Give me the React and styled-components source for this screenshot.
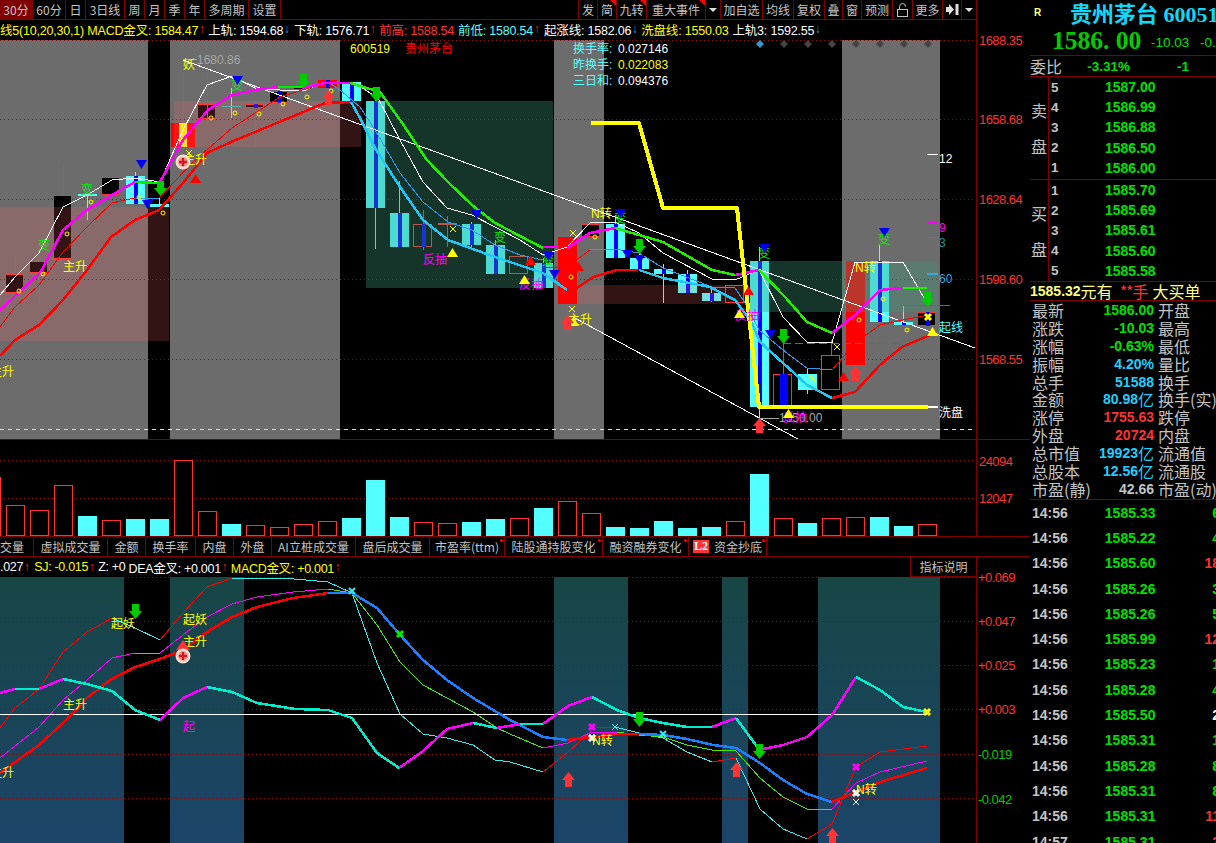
import styled, { createGlobalStyle } from 'styled-components';

const FONT = '"Liberation Sans", "Noto Sans CJK SC", sans-serif';
const CJK = '"Noto Sans CJK SC", "Liberation Sans", sans-serif';
const LINE = '#800000';
const GREY = '#c4c4c4';
const RED = '#ff3232';
const CYAN = '#54ffff';

const xOf = (k) => 15 + 24 * k;

const TOOLS_LEFT = [
  ['30分', 33, true], ['60分', 33], ['日', 20], ['3日线', 39], ['周', 20], ['月', 20], ['季', 20], ['年', 20], ['多周期', 44], ['设置', 32],
];

const INFO = [
  ['线5(10,20,30,1) MACD金叉: 1584.47', '#ffff00', 'up', 3],
  ['上轨: 1594.68', '#ffffff', 'down', 4],
  ['下轨: 1576.71', '#ffffff', 'up', 3],
  ['前高: 1588.54', RED, '', 4],
  ['前低: 1580.54', CYAN, 'up', 4],
  ['起涨线: 1582.06', '#ffffff', 'down', 3],
  ['洗盘线: 1550.03', '#ffff00', '', 4],
  ['上轨3: 1592.55', '#ffffff', 'down', 0],
];

const TABS = [
  ['成交量', 34], ['虚拟成交量', 74], ['金额', 38], ['换手率', 50], ['内盘', 38], ['外盘', 38],
  ['AI立桩成交量', 84], ['盘后成交量', 74], ['市盈率(ttm)', 75, true], ['陆股通持股变化', 98, true], ['融资融券变化', 86, true],
];

const MACD_INFO = [
  ['.027', '#ffffff', 'up', 4], ['SJ: -0.015', '#ffff00', 'up', 3], ['Z: +0', '#ffffff', '', 3],
  ['DEA金叉: +0.001', '#ffffff', 'up', 3], ['MACD金叉: +0.001', '#ffff00', 'up', 0],
];

// k, kind, top, bottom, wick top, wick bottom, strip width
const CANDLES = [
  [-1, 'h', 295, 340, 290, 340, 0], [0, 'h', 274, 293, 258, 293, 0], [1, 'h', 261, 273, 248, 302, 0],
  [2, 'h', 195, 259, 163, 259, 0], [3, 'd', 194, 194, 194, 220, 0], [4, 'h', 177, 195, 177, 195, 0],
  [5, 'c', 176, 204, 172, 204, 4], [6, 'c', 204, 207, 198, 207, 0], [8, 'h', 104, 119, 67, 124, 0],
  [9, 't', 106, 106, 88, 118, 0], [10, 'h', 104, 108, 100, 147, 4], [11, 'h', 91, 103, 90, 113, 4],
  [12, 'h', 86, 90, 84, 94, 0], [13, 'r', 80, 88, 76, 90, 4], [14, 'c', 82, 101, 82, 101, 4],
  [15, 'c', 101, 208, 90, 249, 4], [16, 'c', 213, 247, 181, 247, 4], [17, 'h', 224, 247, 210, 250, 4],
  [18, 'x', 223, 223, 216, 247, 0], [19, 'c', 224, 245, 222, 247, 4], [20, 'c', 245, 274, 240, 274, 4],
  [21, 'h', 256, 274, 256, 274, 0], [22, 'c', 263, 288, 258, 288, 4], [23, 'r', 237, 304, 228, 325, 0],
  [24, 'h', 224, 237, 224, 240, 0], [25, 'c', 224, 258, 215, 258, 4], [26, 'c', 258, 269, 250, 269, 4],
  [27, 'c', 269, 274, 264, 303, 4], [28, 'c', 274, 293, 270, 293, 4], [29, 'c', 293, 301, 288, 302, 4],
  [30, 'h', 285, 303, 285, 303, 0], [31, 'c', 261, 407, 247, 433, 4], [32, 'h', 374, 407, 343, 407, 8],
  [33, 'c', 374, 390, 368, 394, 0], [34, 'h', 355, 390, 340, 390, 0], [35, 'r', 261, 365, 261, 365, 0],
  [36, 'c', 261, 322, 245, 322, 4], [37, 'c', 322, 325, 306, 325, 4], [38, 'h', 312, 326, 305, 326, 4],
];

const VOLUMES = [
  ['h', 477], ['h', 505], ['h', 510], ['h', 485], ['c', 516], ['h', 520], ['c', 519], ['c', 519], ['h', 460], ['h', 511],
  ['c', 524], ['h', 525], ['h', 527], ['h', 524], ['h', 521], ['c', 518], ['c', 480], ['c', 517], ['h', 522], ['h', 523],
  ['c', 522], ['c', 519], ['h', 518], ['c', 508], ['h', 501], ['h', 513], ['c', 527], ['c', 528], ['c', 521], ['c', 528],
  ['c', 527], ['h', 521], ['c', 474], ['h', 518], ['c', 523], ['h', 518], ['h', 517], ['c', 517], ['c', 526], ['h', 524],
];

const THICK = 2.5;

const PRICE_LINES = [
  ['#ffffff', 1, '183,60 975,348'],
  ['#ffffff', 1, '573,317 798,439'],
  ['#ffffff', 1, '0,295 15,277 39,253 63,207 87,195 112,180 135,178 160,182 183,130 207,85 232,76 257,89 303,91 325,82 353,82 378,98 400,140 423,182 447,208 472,215 495,227 520,240 543,255 567,247 590,223 615,222 639,233 663,253 712,279 735,280 759,270 783,317 807,342 832,343 855,262 903,262 927,303'],
  ['#ff0000', 1, '0,327 15,307 39,285 63,252 87,227 112,203 135,198 159,198 192,163 232,128 280,97 328,82'],
  ['#3399ee', 1, '328,82 340,90 360,107 375,130 400,173 423,202 448,222 472,230 495,245 520,255 543,260'],
  ['#ff0000', 1, '543,268 567,267 590,250'],
  ['#3399ee', 1, '590,249 615,249 639,253 663,268 712,287 735,288 745,303 759,330 783,350 807,368 832,370'],
  ['#ff0000', 1, '832,370 855,343 880,325 903,320 928,315'],
  ['#ff0000', THICK, '0,356 15,340 39,325 63,300 87,270 111,237 135,220 159,210 183,183 207,153 231,142 260,130 325,103 351,102'],
  ['#1fc8f5', THICK, '351,102 360,118 375,148 400,187 423,220 448,240 495,257 543,273 567,290'],
  ['#ff0000', THICK, '577,288 593,277 617,270 638,270'],
  ['#1fc8f5', THICK, '639,270 663,278 710,287 735,300 752,323 760,342 783,363 807,385 832,398'],
  ['#ff0000', THICK, '832,398 855,392 880,365 902,347 930,335'],
  ['#ff00ff', THICK, '0,310 40,273 63,230 87,210 112,195 135,182'],
  ['#00ee00', THICK, '135,182 158,183'],
  ['#ff00ff', THICK, '160,182 183,140 197,123 208,110 232,95 260,89 278,87'],
  ['#00ee00', THICK, '278,87 302,87'],
  ['#ff00ff', THICK, '302,88 325,83 350,83'],
  ['#22ee00', THICK, '350,83 380,92 400,120 427,160 448,182 472,205 495,223 543,248'],
  ['#ff00ff', THICK, '543,247 557,247'],
  ['#ff00ff', THICK, '567,248 590,233 615,228'],
  ['#22ee00', THICK, '615,228 663,242 712,270 735,275'],
  ['#ff00ff', THICK, '735,275 759,270'],
  ['#22ee00', THICK, '759,270 785,297 807,322 832,333'],
  ['#ff00ff', THICK, '832,333 855,315 880,290 902,288'],
  ['#22ee00', THICK, '903,288 927,288'],
  ['#ffff00', 4, '591,123 639,123 663,208 737,208 759,407 928,407'],
  ['#ffffff', 2, '928,407 938,407'],
];

const MACD_LINES = [
  ['#ff0000', 1, '0,728 15,708 39,689 63,652 87,632 112,618'],
  ['#33eeee', 1, '112,618 135,628 160,640'],
  ['#ff0000', 1, '160,640 183,613 207,587 232,578'],
  ['#33eeee', 1, '232,578 283,578 328,582 352,593 377,663 400,714 423,734 447,738 473,745 495,760 510,762 543,772'],
  ['#ff0000', 1, '543,772 568,752 592,730'],
  ['#ff0000', 1, '592,727 615,727'],
  ['#33eeee', 1, '615,727 639,733 663,738 687,752 712,762'],
  ['#ff0000', 1, '712,762 736,758'],
  ['#33eeee', 1, '736,758 760,809 783,829 807,839'],
  ['#ff0000', 1, '807,839 832,824 856,767 880,752 927,746'],
  ['#ff00ff', 1, '0,758 39,727 63,700 87,680 112,658 135,653'],
  ['#44ee00', 1, '135,653 160,653'],
  ['#ff00ff', 1, '160,653 183,635 207,617 232,604 257,597 293,592 328,589'],
  ['#44ee00', 1, '328,589 352,593 377,625 400,662 423,685 447,698 473,712 497,728 510,734 543,748'],
  ['#ff00ff', 1, '543,748 568,743 592,732 617,732'],
  ['#44ee00', 1, '617,732 639,735 663,737 687,745 712,750 736,751 760,778 783,797 807,809 832,809'],
  ['#ff00ff', 1, '832,809 856,783 880,772 927,761'],
  ['#ffffff', 1, '0,714 927,714'],
  ['#ff0000', THICK, '0,773 39,745 63,723 87,698 110,680 135,667 160,659 183,650 207,632 232,617 257,607 293,598 328,593'],
  ['#1a80ff', THICK, '328,593 352,593 377,608 400,635 423,660 447,680 473,698 510,720 543,737 567,740'],
  ['#ff0000', THICK, '567,740 592,737 617,734 639,734'],
  ['#1a80ff', THICK, '639,734 663,735 687,739 713,745 736,748 760,763 783,780 807,794 832,802'],
  ['#ff0000', THICK, '832,802 856,792 880,782 927,768'],
  ['#ff00ff', THICK, '0,693 15,689'],
  ['#00eecc', THICK, '15,689 39,689'],
  ['#ff00ff', THICK, '39,689 63,679'],
  ['#00eecc', THICK, '63,679 87,684 112,691 135,710 160,720'],
  ['#ff00ff', THICK, '160,720 183,698 207,687'],
  ['#00eecc', THICK, '207,687 232,692 257,703 295,709 328,710 352,718 377,753 399,768'],
  ['#ff00ff', THICK, '399,768 423,751 447,729 473,723'],
  ['#00eecc', THICK, '473,723 497,728'],
  ['#ff00ff', THICK, '497,728 520,724'],
  ['#00eecc', THICK, '520,724 543,724'],
  ['#ff00ff', THICK, '543,724 568,706 592,697'],
  ['#00eecc', THICK, '592,697 617,710 639,718 663,723 687,727 712,727'],
  ['#ff00ff', THICK, '712,727 736,718'],
  ['#00eecc', THICK, '736,718 758,748'],
  ['#ff00ff', THICK, '758,750 783,745 807,737 832,715 856,677'],
  ['#00eecc', THICK, '856,677 880,690 903,707 927,712'],
];

const PRICE_LABELS = [
  [197, 64, '1680.86', '#a8a8a8'], [350, 53, '600519', '#ffff00'], [405, 53, '贵州茅台', '#ff0000'],
  [573, 53, '换手率:', CYAN], [618, 53, '0.027146', '#ffffff'], [573, 69, '昨换手:', CYAN], [618, 69, '0.022083', '#ffff00'],
  [573, 85, '三日和:', CYAN], [618, 85, '0.094376', '#ffffff'],
  [183, 69, '妖', '#ffff00'], [63, 271, '主升', '#ffff00'], [-10, 376, '主升', '#ffff00'], [183, 164, '主升', '#ffff00'],
  [423, 264, '反抽', '#ff00ff'], [519, 289, '反抽', '#ff00ff'], [568, 324, '主升', '#ffff00'], [735, 320, '反抽', '#ff00ff'],
  [767, 422, '—1550.00', '#a8a8a8'], [783, 422, '反抽', '#ff00ff'],
  [591, 218, 'N转', '#ffff00'], [855, 272, 'N转', '#ffff00'],
  [81, 194, '变', '#00ee00'], [38, 250, '变', '#00ee00'], [231, 90, '变', '#00ee00'], [494, 242, '变', '#00ee00'],
  [542, 265, '变', '#00ee00'], [614, 223, '变', '#00ee00'], [758, 258, '变', '#00ee00'], [878, 244, '变', '#00ee00'],
  [939, 417, '洗盘', '#ffffff'], [939, 332, '起线', CYAN], [939, 283, '60', '#33aadd'], [939, 163, '12', '#ffffff'],
  [939, 232, '9', '#ff00ff'], [939, 247, '3', '#109a9a'],
];

const MACD_LABELS = [
  [111, 628, '起妖', '#ffff00'], [183, 624, '起妖', '#ffff00'], [183, 646, '主升', '#ffff00'], [63, 709, '主升', '#ffff00'],
  [-10, 777, '主升', '#ffff00'], [183, 731, '起', '#ff00ff'], [592, 745, 'N转', '#ffff00'], [856, 794, 'N转', '#ffff00'],
];

const BLUE_TRI = [[141, 160], [147, 200], [237, 76], [476, 210], [548, 252], [554, 270], [620, 209], [627, 250], [639, 255], [764, 244], [770, 330], [884, 228]];
const RED_TRI = [[195, 174], [748, 286], [843, 372], [530, 256], [578, 262]];
const YELLOW_TRI = [[452, 248], [524, 275], [573, 317], [739, 309], [788, 409], [932, 327]];
const GREEN_ARROWS = [[160, 181], [303, 74], [376, 87], [639, 239], [783, 329], [927, 292]];
const RED_ARROWS = [[567, 315], [328, 90], [759, 418], [855, 366]];
const CIRCLES = [[19, 291], [43, 274], [67, 234], [91, 202], [139, 197], [163, 213], [211, 118], [235, 113], [259, 114], [283, 104], [307, 97], [331, 91], [571, 277], [595, 237], [859, 320], [883, 299], [907, 330]];
const PRICE_CROSSES = [[453, 229, '#ffff00', 1], [573, 233, '#ffff00', 1], [572, 309, '#ffff00', 1], [837, 347, '#ffff00', 1], [813, 379, '#ffff00', 1], [928, 317, '#ffff00', 3], [189, 153, '#ffff00', 1]];

const MACD_GREEN_ARROWS = [[135, 604], [639, 712], [759, 744]];
const MACD_RED_ARROWS = [[568, 772], [736, 762], [832, 828]];
const MACD_CROSSES = [[352, 591, '#33eeee', 2], [400, 634, '#00ee00', 3], [592, 727, '#ff00ff', 3], [592, 738, '#ffffff', 3], [615, 727, '#33eeee', 1], [663, 734, '#33eeee', 2], [856, 767, '#ff00ff', 3], [856, 793, '#ffffff', 3], [856, 802, '#ffffff', 1], [927, 712, '#ffff00', 3]];

const SELL = [['5', '1587.00'], ['4', '1586.99'], ['3', '1586.88'], ['2', '1586.50'], ['1', '1586.00']];
const BUY = [['1', '1585.70'], ['2', '1585.69'], ['3', '1585.61'], ['4', '1585.60'], ['5', '1585.58']];

const STATS = [
  ['最新', '1586.00', '', '#00e000', '开盘'], ['涨跌', '-10.03', '', '#00e000', '最高'], ['涨幅', '-0.63%', '', '#00e000', '最低'],
  ['振幅', '4.20%', '', '#1fd0ff', '量比'], ['总手', '51588', '', '#1fd0ff', '换手'], ['金额', '80.98', '亿', '#1fd0ff', '换手(实)'],
  ['涨停', '1755.63', '', RED, '跌停'], ['外盘', '20724', '', RED, '内盘'], ['总市值', '19923', '亿', '#1fd0ff', '流通值'],
  ['总股本', '12.56', '亿', '#1fd0ff', '流通股'], ['市盈(静)', '42.66', '', GREY, '市盈(动)'],
];

const TICKS = [
  ['1585.33', '62', '#00e000'], ['1585.22', '48', '#00e000'], ['1585.60', '183', RED], ['1585.26', '37', '#00e000'],
  ['1585.26', '55', '#00e000'], ['1585.99', '126', RED], ['1585.23', '15', '#00e000'], ['1585.28', '42', '#00e000'],
  ['1585.50', '24', '#ffffff'], ['1585.31', '17', '#00e000'], ['1585.28', '84', '#00e000'], ['1585.31', '83', '#00e000'],
  ['1585.31', '115', RED], ['1585.31', '21', RED],
];

function Grid({ rows, dashed }) {
  return (
    <>
      {rows.map((y) => <line key={y} x1="0" x2="976" y1={y + 0.5} y2={y + 0.5} stroke="#8c0c0c" strokeDasharray="1 3" />)}
      {dashed && <line x1="0" x2="976" y1={dashed + 0.5} y2={dashed + 0.5} stroke="#ffff00" strokeDasharray="4 4" />}
    </>
  );
}

function Lines({ data }) {
  return data.map(([color, width, points], i) => (
    <polyline key={i} points={points} fill="none" stroke={color} strokeWidth={width} strokeLinejoin="round" shapeRendering="crispEdges" />
  ));
}

function Candle({ k, kind, top, bottom, wickTop, wickBottom, strip }) {
  const x = xOf(k);
  const isUp = kind === 'h' || kind === 'r' || kind === 'x';
  const wick = isUp ? RED : CYAN;
  return (
    <g shapeRendering="crispEdges">
      <line x1={x + 0.5} x2={x + 0.5} y1={wickTop} y2={wickBottom} stroke={wick} />
      {kind === 'h' && <rect x={x - 9.5} y={top + 0.5} width={18} height={bottom - top - 1} fill="#000" stroke={RED} strokeWidth="1" />}
      {kind === 'r' && <rect x={x - 9} y={top} width={19} height={bottom - top} fill="#ff0000" />}
      {kind === 'c' && <rect x={x - 9} y={top} width={19} height={bottom - top} fill={CYAN} />}
      {kind === 'd' && <line x1={x - 9} x2={x + 10} y1={top + 0.5} y2={top + 0.5} stroke={CYAN} strokeWidth="2" />}
      {kind === 't' && <line x1={x - 9} x2={x + 10} y1={top + 0.5} y2={top + 0.5} stroke="#2fc4c4" strokeWidth="1" />}
      {kind === 'x' && <line x1={x - 9} x2={x + 10} y1={top + 0.5} y2={top + 0.5} stroke={RED} strokeWidth="2" />}
      {strip > 0 && <rect x={x - strip / 2 + 0.5} y={top} width={strip} height={bottom - top} fill="#0000ff" />}
    </g>
  );
}

function Triangle({ x, y, color, down }) {
  const points = down ? `${x - 5},${y} ${x + 6},${y} ${x + 0.5},${y + 9}` : `${x - 5},${y + 9} ${x + 6},${y + 9} ${x + 0.5},${y}`;
  return <polygon points={points} fill={color} />;
}

function ArrowDown({ x, y, color }) {
  return <polygon points={`${x - 3},${y} ${x + 4},${y} ${x + 4},${y + 7} ${x + 7},${y + 7} ${x + 0.5},${y + 15} ${x - 6},${y + 7} ${x - 3},${y + 7}`} fill={color} />;
}

function ArrowUp({ x, y, color }) {
  return <polygon points={`${x + 0.5},${y} ${x + 7},${y + 8} ${x + 4},${y + 8} ${x + 4},${y + 15} ${x - 3},${y + 15} ${x - 3},${y + 8} ${x - 6},${y + 8}`} fill={color} />;
}

function Cross({ x, y, color, width }) {
  return <path d={`M${x - 3} ${y - 3}L${x + 3} ${y + 3}M${x + 3} ${y - 3}L${x - 3} ${y + 3}`} stroke={color} strokeWidth={width} fill="none" />;
}

function PlusCircle({ x, y }) {
  return (
    <g>
      <circle cx={x} cy={y} r="7.5" fill="#f6dccf" />
      <circle cx={x} cy={y} r="5" fill="#ee9c94" />
      <path d={`M${x - 4} ${y}H${x + 4}M${x} ${y - 4}V${y + 4}`} stroke="#d8141c" strokeWidth="2.4" />
    </g>
  );
}

function Labels({ data }) {
  return data.map(([x, y, text, color]) => <ChartLabel key={`${x}-${y}`} x={x} y={y} fill={color}>{text}</ChartLabel>);
}

function PriceChart() {
  return (
    <ChartSvg viewBox="0 40 1030 399" width="1030" height="399">
      {[[0, 148], [170, 170], [554, 50], [842, 98]].map(([x, w]) => <rect key={x} x={x} y="40" width={w} height="399" fill="#6c6c6c" />)}
      <Grid rows={[40, 119, 199, 279, 359]} dashed={429} />
      {CANDLES.map(([k, kind, top, bottom, wickTop, wickBottom, strip]) => (
        <Candle key={k} k={k} kind={kind} top={top} bottom={bottom} wickTop={wickTop} wickBottom={wickBottom} strip={strip} />
      ))}
      <line x1="183.5" x2="183.5" y1="62" y2="165" stroke={RED} />
      <rect x="171" y="123" width="24" height="24" fill="#ff0000" />
      <rect x="179" y="123" width="8" height="24" fill="#ffff00" />
      <line x1="207.5" x2="207.5" y1="67" y2="124" stroke={RED} />
      {/* zones lie over the candles, that is why the candles look tinted */}
      <rect x="0" y="207" width="169" height="134" fill="#ff6464" fillOpacity="0.2" />
      <rect x="174" y="101" width="187" height="46" fill="#ff6464" fillOpacity="0.2" />
      <rect x="577" y="285" width="169" height="19" fill="#ff6464" fillOpacity="0.2" />
      <rect x="366" y="101" width="187" height="187" fill="#409878" fillOpacity="0.35" />
      <rect x="750" y="261" width="188" height="51" fill="#409878" fillOpacity="0.35" />
      <Lines data={PRICE_LINES} />
      <g shapeRendering="crispEdges">
        <line x1="135" x2="159" y1="198.5" y2="198.5" stroke="#3399ee" />
        <line x1="183" x2="197" y1="59.5" y2="59.5" stroke="#a8a8a8" />
        <line x1="759" x2="768" y1="418.5" y2="418.5" stroke="#a8a8a8" />
        <line x1="783" x2="902" y1="343.5" y2="343.5" stroke="#ff00ff" strokeDasharray="8 4" />
        <line x1="903" x2="950" y1="305.5" y2="305.5" stroke="#ff00ff" />
        <line x1="927" x2="938" y1="154.5" y2="154.5" stroke="#ffffff" />
        <line x1="927" x2="938" y1="222.5" y2="222.5" stroke="#ff00ff" strokeWidth="2" />
        <line x1="927" x2="938" y1="237.5" y2="237.5" stroke="#109a9a" />
        <line x1="927" x2="938" y1="274" y2="274" stroke="#33aadd" strokeWidth="2" />
      </g>
      {[760, 784, 808, 832, 856, 880, 904, 928].map((x, i) => (
        <polygon key={x} points={`${x},40 ${x + 4},44 ${x},48 ${x - 4},44`} fill={i === 0 ? '#3399cc' : '#444444'} />
      ))}
      {CIRCLES.map(([x, y]) => <circle key={`${x}-${y}`} cx={x} cy={y} r="2" fill="none" stroke="#ffff00" />)}
      {PRICE_CROSSES.map(([x, y, c, w]) => <Cross key={`${x}-${y}`} x={x} y={y} color={c} width={w} />)}
      <Labels data={PRICE_LABELS} />
      {BLUE_TRI.map(([x, y]) => <Triangle key={`${x}-${y}`} x={x} y={y} color="#0000ee" down />)}
      {RED_TRI.map(([x, y]) => <Triangle key={`${x}-${y}`} x={x} y={y} color="#ff0000" />)}
      {YELLOW_TRI.map(([x, y]) => <Triangle key={`${x}-${y}`} x={x} y={y} color="#ffff00" />)}
      {GREEN_ARROWS.map(([x, y]) => <ArrowDown key={`${x}-${y}`} x={x} y={y} color="#00cc00" />)}
      {RED_ARROWS.map(([x, y]) => <ArrowUp key={`${x}-${y}`} x={x} y={y} color="#ff3333" />)}
      <PlusCircle x={183} y={162} />
      <line x1="976.5" x2="976.5" y1="40" y2="439" stroke={LINE} />
      {[[45, '1688.35'], [124, '1658.68'], [204, '1628.64'], [284, '1598.60'], [364, '1568.55']].map(([y, t]) => (
        <AxisLabel key={t} x="979" y={y} fill={RED}>{t}</AxisLabel>
      ))}
    </ChartSvg>
  );
}

function VolumeChart() {
  return (
    <ChartSvg viewBox="0 440 1030 96" width="1030" height="96">
      <Grid rows={[460, 498]} />
      {VOLUMES.map(([kind, top], i) => {
        const x = xOf(i - 1);
        return kind === 'c'
          ? <rect key={i} x={x - 9} y={top} width="19" height={536 - top} fill={CYAN} shapeRendering="crispEdges" />
          : <rect key={i} x={x - 8.5} y={top + 0.5} width="18" height={535 - top} fill="#000" stroke={RED} shapeRendering="crispEdges" />;
      })}
      <line x1="976.5" x2="976.5" y1="440" y2="536" stroke={LINE} />
      <AxisLabel x="979" y="466" fill={RED}>24094</AxisLabel>
      <AxisLabel x="979" y="503" fill={RED}>12047</AxisLabel>
    </ChartSvg>
  );
}

function MacdChart() {
  return (
    <ChartSvg viewBox="0 577 1030 266" width="1030" height="266">
      <defs>
        <linearGradient id="macdZone" x1="0" x2="0" y1="0" y2="1">
          <stop offset="0" stopColor="#174645" />
          <stop offset="1" stopColor="#1b4469" />
        </linearGradient>
      </defs>
      {[[0, 124], [170, 74], [554, 74], [722, 26], [818, 122]].map(([x, w]) => <rect key={x} x={x} y="577" width={w} height="266" fill="url(#macdZone)" />)}
      <Grid rows={[577, 621, 665, 709, 754, 798]} />
      <Lines data={MACD_LINES} />
      {MACD_CROSSES.map(([x, y, c, w]) => <Cross key={`${x}-${y}`} x={x} y={y} color={c} width={w} />)}
      <Labels data={MACD_LABELS} />
      {MACD_GREEN_ARROWS.map(([x, y]) => <ArrowDown key={x} x={x} y={y} color="#00cc00" />)}
      {MACD_RED_ARROWS.map(([x, y]) => <ArrowUp key={x} x={x} y={y} color="#ff3333" />)}
      <polygon points="183,640 190,650 176,650" fill="#ff3333" />
      <PlusCircle x={183} y={656} />
      <line x1="976.5" x2="976.5" y1="577" y2="843" stroke={LINE} />
      {[[582, '+0.069', RED], [626, '+0.047', RED], [670, '+0.025', RED], [714, '+0.003', RED], [759, '-0.019', '#00cc00'], [804, '-0.042', '#00cc00']].map(([y, t, c]) => (
        <AxisLabel key={t} x="978" y={y} fill={c}>{t}</AxisLabel>
      ))}
    </ChartSvg>
  );
}

function InfoItems({ items }) {
  return items.map(([text, color, dir, gap]) => (
    <InfoItem key={text} $color={color} $gap={gap}>
      {text}
      {dir && <InfoArrow $dir={dir}>{dir === 'up' ? '↑' : '↓'}</InfoArrow>}
    </InfoItem>
  ));
}

function Toolbar() {
  return (
    <ToolRow>
      {TOOLS_LEFT.map(([label, width, active]) => <ToolButton key={label} $w={width} $active={active}>{label}</ToolButton>)}
      <ToolSpacer />
      <ToolButton $w={19}>发</ToolButton>
      <ToolButton $w={19} $flag>简</ToolButton>
      <ToolButton $w={30} $flag>九转</ToolButton>
      <ToolButton $w={59} $flag>重大事件</ToolButton>
      <ToolButton $w={15}><Caret /></ToolButton>
      <ToolButton $w={42}>加自选</ToolButton>
      <ToolButton $w={31}>均线</ToolButton>
      <ToolButton $w={31}>复权</ToolButton>
      <ToolButton $w={18}>叠</ToolButton>
      <ToolButton $w={19}>窗</ToolButton>
      <ToolButton $w={31}>预测</ToolButton>
      <ToolButton $w={20}>
        <svg width="12" height="14" viewBox="0 0 12 14" aria-hidden="true">
          <path d="M2.5 6V3.5a3 3 0 0 1 6 0" fill="none" stroke="#c4c4c4" />
          <rect x="0.5" y="6.5" width="10" height="7" fill="none" stroke="#c4c4c4" />
        </svg>
      </ToolButton>
      <ToolButton $w={30}>更多</ToolButton>
      <ToolButton $w={19}>
        <svg width="13" height="11" viewBox="0 0 13 11" aria-hidden="true">
          <path d="M0 3h3V0l5 5.5L3 11V8H0z" fill="#e0e0e0" />
          <rect x="9.5" y="0" width="3" height="11" fill="#e0e0e0" />
        </svg>
      </ToolButton>
      <ToolButton $w={14}><Caret /></ToolButton>
    </ToolRow>
  );
}

function QuoteRows({ rows }) {
  return (
    <QuoteList>
      {rows.map(([level, price]) => (
        <QuoteRow key={level}>
          <Level>{level}</Level>
          <Num $color="#00e000">{price}</Num>
        </QuoteRow>
      ))}
    </QuoteList>
  );
}

export default function App() {
  return (
    <Page>
      <GlobalStyle />
      <ChartArea>
        <Toolbar />
        <InfoBar><InfoItems items={INFO} /></InfoBar>
        <PricePane><PriceChart /></PricePane>
        <VolumePane><VolumeChart /></VolumePane>
        <TabRow>
          {TABS.map(([label, width, dot], i) => (
            <Tab key={label} $w={width} $right={i === 0}>{label}{dot && <TabDot />}</Tab>
          ))}
          <Tab $w={78}><Badge>L2</Badge>资金抄底<TabDot /></Tab>
        </TabRow>
        <MacdHead>
          <InfoItems items={MACD_INFO} />
          <HelpButton>指标说明</HelpButton>
        </MacdHead>
        <MacdChart />
      </ChartArea>
      <SidePanel>
        <StockHead>
          <NameRow><Badge2>R</Badge2><StockName>贵州茅台 600519</StockName></NameRow>
          <PriceRow>
            <BigPrice>1586. 00</BigPrice>
            <Change>-10.03</Change>
            <Change>-0.63%</Change>
          </PriceRow>
        </StockHead>
        <RatioRow>
          <SideText>委比</SideText>
          <RatioValue $w={68}>-3.31%</RatioValue>
          <RatioValue $w={59}>-1</RatioValue>
        </RatioRow>
        <BookSection $h={103}>
          <BookSide><span>卖</span><span>盘</span></BookSide>
          <QuoteRows rows={SELL} />
        </BookSection>
        <BookSection $h={102}>
          <BookSide><span>买</span><span>盘</span></BookSide>
          <QuoteRows rows={BUY} />
        </BookSection>
        <BigOrder>
          <Num $color="#ffff80">1585.32</Num><span>元有</span>
          <BigOrderRed>**手</BigOrderRed>
          <BigOrderLast>大买单</BigOrderLast>
        </BigOrder>
        <StatsList>
          {STATS.map(([label, value, unit, color, right]) => (
            <StatRow key={label}>
              <SideText>{label}</SideText>
              <StatValue $color={color}>{value}{unit && <Unit>{unit}</Unit>}</StatValue>
              <SideText>{right}</SideText>
            </StatRow>
          ))}
        </StatsList>
        <TickList>
          {TICKS.map(([price, vol, color], i) => (
            <TickRow key={i}>
              <Num $color={GREY}>14:5{i === 13 ? 7 : 6}</Num>
              <TickPrice>{price}</TickPrice>
              <TickVol $color={color}>{vol}</TickVol>
            </TickRow>
          ))}
        </TickList>
      </SidePanel>
    </Page>
  );
}

const GlobalStyle = createGlobalStyle`
  html, body {
    margin: 0;
    background: #000000;
    overflow: hidden;
  }
`;

const Page = styled.div`
  display: flex;
  width: 1216px;
  height: 843px;
  overflow: hidden;
  background: #000000;
  font-family: ${CJK};
`;

const ChartArea = styled.div`
  display: flex;
  flex-direction: column;
  width: 1030px;
  flex: none;
`;

const ToolRow = styled.div`
  display: flex;
  box-sizing: border-box;
  width: 977px;
  height: 20px;
  flex: none;
  border-bottom: 1px solid ${LINE};
  border-right: 1px solid ${LINE};
`;

const ToolSpacer = styled.div`
  flex: 1;
  border-right: 1px solid ${LINE};
`;

const ToolButton = styled.div`
  position: relative;
  display: flex;
  align-items: center;
  justify-content: center;
  box-sizing: border-box;
  width: ${(p) => p.$w}px;
  flex: none;
  border-right: 1px solid ${LINE};
  background: ${(p) => (p.$active ? '#800000' : 'transparent')};
  color: ${GREY};
  font-size: 12px;
  white-space: nowrap;
  &:last-child { border-right: none; }
  &::after {
    content: '';
    display: ${(p) => (p.$flag ? 'block' : 'none')};
    position: absolute;
    top: 0;
    right: 0;
    border-top: 6px solid #ff0000;
    border-left: 6px solid transparent;
  }
`;

const Caret = styled.span`
  width: 0;
  height: 0;
  border-top: 4px solid #e0e0e0;
  border-left: 4px solid transparent;
  border-right: 4px solid transparent;
`;

const InfoBar = styled.div`
  display: flex;
  align-items: center;
  box-sizing: border-box;
  height: 20px;
  padding-bottom: 2px;
  flex: none;
  width: 977px;
  border-right: 1px solid ${LINE};
  overflow: hidden;
  white-space: nowrap;
`;

const InfoItem = styled.span`
  display: inline-flex;
  align-items: center;
  margin-right: ${(p) => p.$gap}px;
  color: ${(p) => p.$color};
  font-family: ${FONT};
  font-size: 12.5px;
  letter-spacing: -0.2px;
`;

const InfoArrow = styled.span`
  width: 7px;
  text-align: center;
  font-size: 12px;
  color: ${(p) => (p.$dir === 'up' ? '#ff2020' : '#1fa0e0')};
`;

const PricePane = styled.div`
  height: 399px;
  flex: none;
  border-bottom: 1px solid ${LINE};
`;

const VolumePane = styled.div`
  height: 96px;
  flex: none;
  border-bottom: 1px solid ${LINE};
`;

const ChartSvg = styled.svg`
  display: block;
  overflow: visible;
`;

const ChartLabel = styled.text`
  font-family: ${FONT};
  font-size: 12px;
`;

const AxisLabel = styled.text`
  font-family: ${FONT};
  font-size: 13px;
  letter-spacing: -0.55px;
`;

const TabRow = styled.div`
  display: flex;
  height: 19px;
  flex: none;
  border-bottom: 1px solid ${LINE};
`;

const Tab = styled.div`
  position: relative;
  display: flex;
  align-items: center;
  justify-content: ${(p) => (p.$right ? 'flex-end' : 'center')};
  box-sizing: border-box;
  width: ${(p) => p.$w}px;
  padding-right: ${(p) => (p.$right ? 9 : 0)}px;
  flex: none;
  overflow: hidden;
  border-right: 1px solid ${LINE};
  color: ${GREY};
  font-size: 12px;
  white-space: nowrap;
`;

const TabDot = styled.span`
  position: absolute;
  top: 2px;
  right: 1px;
  width: 3px;
  height: 3px;
  border-radius: 50%;
  background: #ff0000;
`;

const Badge = styled.span`
  margin-right: 5px;
  padding: 0 1px;
  background: #ff3232;
  color: #ffffff;
  font-family: "Liberation Serif", serif;
  font-size: 12px;
  font-weight: bold;
  line-height: 13px;
`;

const MacdHead = styled.div`
  display: flex;
  align-items: center;
  width: 977px;
  box-sizing: border-box;
  height: 20px;
  flex: none;
  overflow: hidden;
  white-space: nowrap;
  border-right: 1px solid ${LINE};
  ${InfoItem} { letter-spacing: -0.3px; }
`;

const HelpButton = styled.div`
  margin-left: auto;
  box-sizing: border-box;
  width: 66px;
  height: 20px;
  line-height: 19px;
  text-align: center;
  border-left: 1px solid ${LINE};
  border-bottom: 1px solid ${LINE};
  color: ${GREY};
  font-size: 12px;
`;

const SidePanel = styled.div`
  display: flex;
  flex-direction: column;
  width: 186px;
  flex: none;
  overflow: hidden;
`;

const StockHead = styled.div`
  box-sizing: border-box;
  height: 56px;
  flex: none;
  border-bottom: 1px solid ${LINE};
  overflow: hidden;
`;

const NameRow = styled.div`
  display: flex;
  align-items: center;
  height: 24px;
  white-space: nowrap;
`;

const Badge2 = styled.span`
  width: 40px;
  padding-left: 4px;
  flex: none;
  box-sizing: border-box;
  color: #ffff80;
  font-family: ${FONT};
  font-size: 10px;
  font-weight: bold;
`;

const StockName = styled.span`
  color: #10d8f8;
  font-family: "Liberation Serif", "Noto Sans CJK SC", serif;
  font-size: 22px;
  font-weight: bold;
`;

const PriceRow = styled.div`
  display: flex;
  align-items: center;
  box-sizing: border-box;
  height: 31px;
  padding: 3px 0 0 22px;
  white-space: nowrap;
`;

const BigPrice = styled.span`
  width: 99px;
  flex: none;
  color: #00cc00;
  font-family: "Liberation Serif", serif;
  font-size: 25.5px;
  font-weight: bold;
`;

const Change = styled.span`
  width: 49px;
  padding-top: 2px;
  flex: none;
  color: #00e000;
  font-family: ${FONT};
  font-size: 13.5px;
`;

const RatioRow = styled.div`
  display: flex;
  align-items: center;
  box-sizing: border-box;
  height: 21px;
  flex: none;
  border-bottom: 1px solid ${LINE};
`;

const SideText = styled.span`
  color: ${GREY};
  font-size: 16px;
  line-height: 18px;
  white-space: nowrap;
`;

const RatioValue = styled.span`
  width: ${(p) => p.$w}px;
  flex: none;
  text-align: right;
  color: #00e000;
  font-family: ${FONT};
  font-size: 13.5px;
  font-weight: bold;
`;

const BookSection = styled.div`
  display: flex;
  box-sizing: border-box;
  height: ${(p) => p.$h}px;
  flex: none;
  border-bottom: 1px solid ${LINE};
`;

const BookSide = styled.div`
  display: flex;
  flex-direction: column;
  align-items: center;
  justify-content: center;
  gap: 20px;
  box-sizing: border-box;
  width: 19px;
  flex: none;
  border-right: 1px solid ${LINE};
  color: ${GREY};
  font-size: 16px;
  line-height: 16px;
`;

const QuoteList = styled.div`
  display: flex;
  flex-direction: column;
  flex: 1;
`;

const QuoteRow = styled.div`
  display: flex;
  align-items: center;
  height: 20.2px;
`;

const Level = styled.span`
  width: 54px;
  padding-left: 2px;
  flex: none;
  color: ${GREY};
  font-family: ${FONT};
  font-size: 13.5px;
  font-weight: bold;
`;

const Num = styled.span`
  color: ${(p) => p.$color};
  font-family: ${FONT};
  font-size: 14px;
  font-weight: bold;
`;

const BigOrder = styled.div`
  display: flex;
  align-items: center;
  box-sizing: border-box;
  height: 19px;
  flex: none;
  border-bottom: 1px solid ${LINE};
  color: #ffff80;
  font-size: 16px;
  white-space: nowrap;
`;

const BigOrderRed = styled.span`
  margin-left: 7px;
  letter-spacing: -1px;
  color: ${RED};
`;

const BigOrderLast = styled.span`
  margin-left: 5px;
`;

const StatsList = styled.div`
  display: flex;
  flex-direction: column;
  box-sizing: border-box;
  height: 199px;
  flex: none;
  border-bottom: 1px solid ${LINE};
`;

const StatRow = styled.div`
  display: grid;
  grid-template-columns: 52px 74px auto;
  align-items: center;
  height: 17.9px;
  padding-left: 2px;
`;

const StatValue = styled.span`
  display: flex;
  align-items: center;
  justify-content: flex-end;
  margin-right: 4px;
  color: ${(p) => p.$color};
  font-family: ${FONT};
  font-size: 14px;
  font-weight: bold;
`;

const Unit = styled.span`
  font-family: ${CJK};
  font-size: 16px;
  font-weight: normal;
  line-height: 17px;
`;

const TickList = styled.div`
  display: flex;
  flex-direction: column;
  flex: none;
`;

const TickRow = styled.div`
  display: flex;
  align-items: center;
  height: 25.3px;
  padding-left: 2px;
  flex: none;
`;

const TickPrice = styled.span`
  width: 73px;
  margin-left: 37px;
  flex: none;
  color: #00e000;
  font-family: ${FONT};
  font-size: 14px;
  font-weight: bold;
`;

const TickVol = styled.span`
  width: 50px;
  flex: none;
  text-align: right;
  color: ${(p) => p.$color};
  font-family: ${FONT};
  font-size: 14px;
  font-weight: bold;
`;
